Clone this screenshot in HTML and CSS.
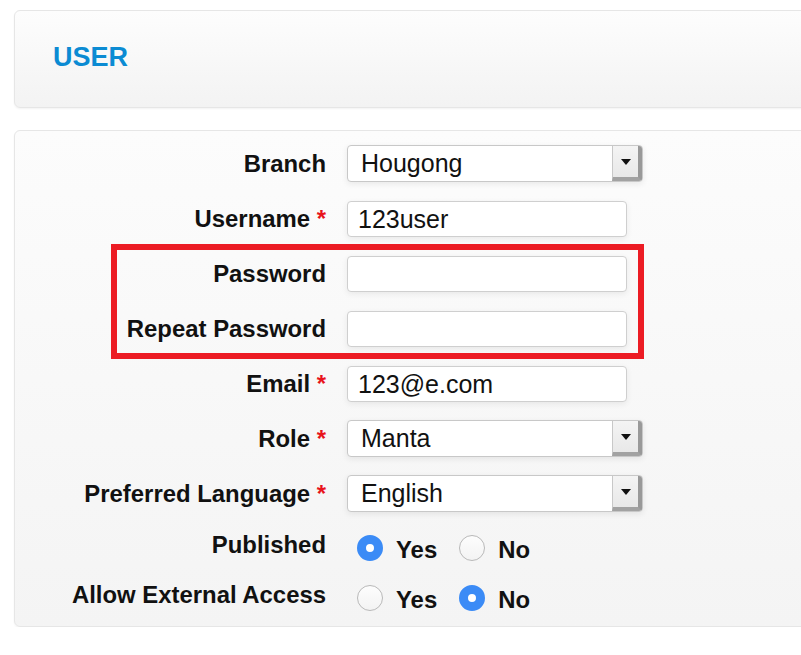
FILE: index.html
```html
<!DOCTYPE html>
<html lang="en">
	<head>
		<title>User</title>
		<link rel="stylesheet" href="styles.css">
	</head>
	<body>
		<div class="panel head">
			<h2>USER</h2>
		</div>
		<div class="panel form">
			<div class="row">
				<label>Branch</label>
				<div class="select"><span>Hougong</span><i class="btn"></i></div>
			</div>
			<div class="row">
				<label>Username <em>*</em></label>
				<div class="input">123user</div>
			</div>
			<div class="row">
				<label>Password</label>
				<div class="input"></div>
			</div>
			<div class="row">
				<label>Repeat Password</label>
				<div class="input"></div>
			</div>
			<div class="row">
				<label>Email <em>*</em></label>
				<div class="input">123@e.com</div>
			</div>
			<div class="row">
				<label>Role <em>*</em></label>
				<div class="select"><span>Manta</span><i class="btn"></i></div>
			</div>
			<div class="row">
				<label>Preferred Language <em>*</em></label>
				<div class="select"><span>English</span><i class="btn"></i></div>
			</div>
			<div class="row radios">
				<label>Published</label>
				<div class="options">
					<span class="radio checked"></span><b>Yes</b>
					<span class="radio"></span><b>No</b>
				</div>
			</div>
			<div class="row radios">
				<label>Allow External Access</label>
				<div class="options">
					<span class="radio"></span><b>Yes</b>
					<span class="radio checked"></span><b>No</b>
				</div>
			</div>
			<!-- annotation round the two password rows -->
			<div class="mark"></div>
		</div>
	</body>
</html>
```
FILE: styles.css
```css
* {
  margin: 0;
  padding: 0;
  box-sizing: border-box;
}

html, body {
  overflow: hidden;
}

body {
  background: #fff;
  padding: 10px 0 0 14px;
  font-family: "Liberation Sans", Arial, sans-serif;
  color: #111;
}

.panel {
  margin-right: -40px;
  border: 1px solid #e6e6e6;
  border-radius: 6px;
  box-shadow: 0 1px 2px rgba(0, 0, 0, 0.05);
}

.head {
  height: 98px;
  display: flex;
  align-items: center;
  padding-left: 38px;
  background: linear-gradient(#fdfdfd, #f3f3f3);
}

.head h2 {
  font-size: 27px;
  font-weight: bold;
  color: #0b8bd3;
  margin-top: -3px;
}

.form {
  position: relative;
  margin-top: 22px;
  padding: 14px 0 10px;
  background: linear-gradient(#fcfcfc, #f4f4f4);
  display: flex;
  flex-direction: column;
  gap: 18px;
}

.row {
  display: flex;
  align-items: center;
  height: 37px;
}

.row label {
  width: 311px;
  margin-right: 21px;
  text-align: right;
  font-size: 23.9px;
  font-weight: bold;
}

.row label em {
  font-style: normal;
  color: #e8141c;
}

.input {
  width: 280px;
  height: 36px;
  background: #fff;
  border: 1px solid #cfcfcf;
  border-radius: 4px;
  box-shadow: 0 2px 6px rgba(0, 0, 0, 0.07);
  padding-left: 10px;
  font-size: 25px;
  line-height: 34px;
}

.select {
  width: 296px;
  height: 37px;
  display: flex;
  background: #fff;
  border: 1px solid #c8c8c8;
  border-radius: 4px;
  box-shadow: 0 2px 6px rgba(0, 0, 0, 0.08);
  overflow: hidden;
}

.select span {
  flex: 1;
  padding-left: 13px;
  font-size: 25px;
  line-height: 35px;
}

.select .btn {
  width: 30px;
  position: relative;
  background: linear-gradient(#f4f4f4, #e8e8e8);
  border-left: 1px solid #c8c8c8;
  border-right: 4px solid #999;
  border-bottom: 4px solid #a2a2a2;
}

.select .btn:after {
  content: "";
  position: absolute;
  left: 8px;
  top: 13px;
  border-left: 5px solid transparent;
  border-right: 5px solid transparent;
  border-top: 6px solid #111;
}

.radios {
  height: 36px;
}

.radios + .radios {
  margin-top: -4px;
}

.radios label {
  margin-top: -6px;
}

.options {
  display: flex;
  align-items: center;
  padding-left: 10px;
  font-size: 23.9px;
}

.options b {
  margin: 3px 22px 0 13px;
}

.radio {
  width: 26px;
  height: 26px;
  border-radius: 50%;
  background: linear-gradient(#fdfdfd, #f3f3f3);
  border: 1px solid #b9b9b9;
}

.radio.checked {
  border: 9px solid #3b8bf6;
  box-shadow: inset 0 0 0 4px #fff;
  background: #fff;
}

.mark {
  position: absolute;
  left: 96px;
  top: 113px;
  width: 533px;
  height: 115px;
  border: 6px solid #ec1c24;
}
```
